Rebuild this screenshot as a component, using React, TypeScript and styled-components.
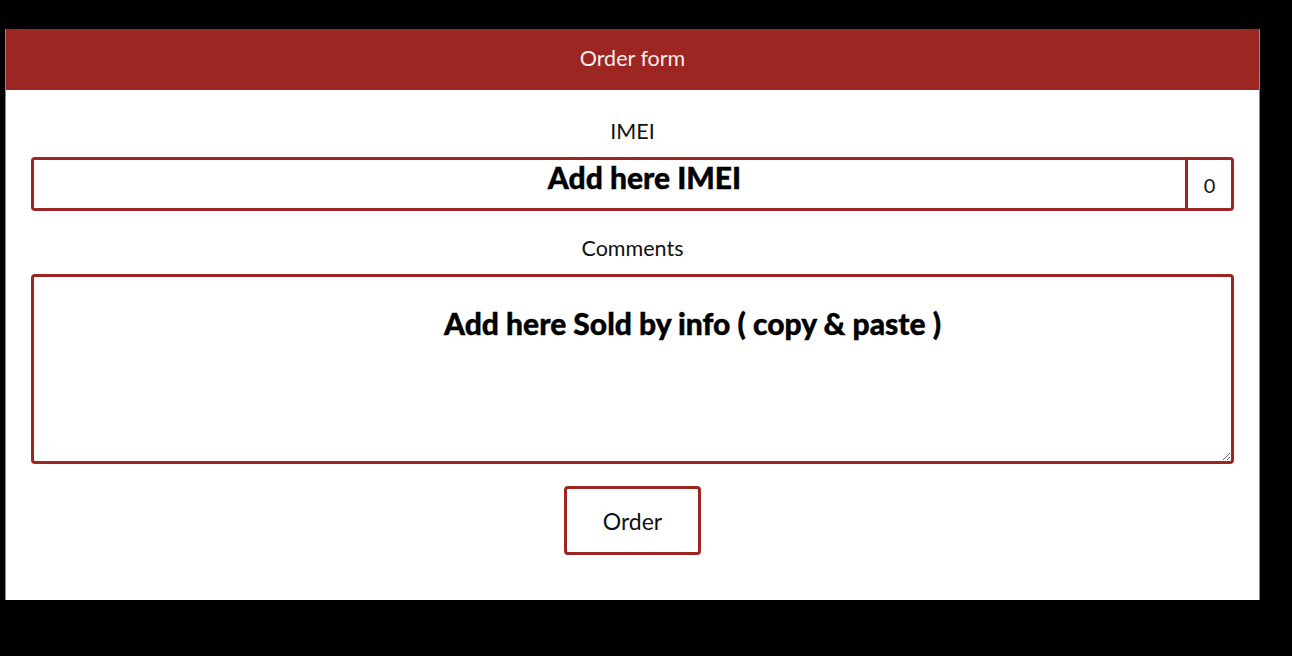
import React, { useState } from "react";
import styled, { createGlobalStyle } from "styled-components";

const GlobalStyle = createGlobalStyle`
  html, body {
    margin: 0;
    padding: 0;
    background: #000;
    font-family: Lato, "Open Sans", sans-serif;
  }
  * {
    box-sizing: border-box;
  }
`;

const red = "#9d2622";

const Page = styled.div`
  width: 1292px;
  height: 656px;
  background: #000;
  padding: 29px 0 0 5px;
`;

const Card = styled.div`
  width: 1255px;
  height: 571px;
  background: #fff;
  border-left: 1px solid #8a8a8a;
  border-right: 1px solid #8a8a8a;
  display: flex;
  flex-direction: column;
`;

const Header = styled.div`
  height: 61px;
  padding-bottom: 3px;
  background: ${red};
  color: #fbeeee;
  font-size: 21.5px;
  display: flex;
  align-items: center;
  justify-content: center;
`;

const Form = styled.form`
  padding: 29px 25px 0;
  display: flex;
  flex-direction: column;
`;

const Field = styled.div<{ $after: number }>`
  display: flex;
  flex-direction: column;
  align-items: stretch;
  gap: 14px;
  margin-bottom: ${(p) => p.$after}px;
`;

const Label = styled.label`
  font-size: 21.5px;
  line-height: 24px;
  color: #111;
  text-align: center;
`;

const InputRow = styled.div`
  display: flex;
  height: 54px;
  border: 3px solid ${red};
  border-radius: 4px;
`;

const bigPlaceholder = `
  font-family: Lato, "Open Sans", sans-serif;
  font-weight: 900;
  font-size: 30px;
  color: #000;
  -webkit-text-stroke: 0.4px #000;
  opacity: 1;
`;

const ImeiInput = styled.input`
  flex: 1;
  min-width: 0;
  border: none;
  border-right: 3px solid ${red};
  outline: none;
  text-align: center;
  padding: 0 0 14px 70px;
  ${bigPlaceholder}
  &::placeholder {
    ${bigPlaceholder}
  }
`;

const Count = styled.div`
  width: 43px;
  display: flex;
  align-items: center;
  justify-content: center;
  font-size: 20px;
  color: #111;
  padding-top: 2px;
`;

const Comments = styled.textarea`
  height: 190px;
  border: 3px solid ${red};
  border-radius: 4px;
  outline: none;
  resize: vertical;
  text-align: center;
  padding: 28px 0 0 120px;
  ${bigPlaceholder}
  &::placeholder {
    ${bigPlaceholder}
  }
`;

const OrderButton = styled.button`
  align-self: center;
  width: 137px;
  height: 69px;
  background: #fff;
  border: 3px solid ${red};
  border-radius: 4px;
  font-family: Lato, "Open Sans", sans-serif;
  font-size: 23px;
  color: #111;
  cursor: pointer;
`;

export default function App() {
  const [imei, setImei] = useState("");
  const [comments, setComments] = useState("");

  return (
    <Page>
      <GlobalStyle />
      <Card>
        <Header>Order form</Header>
        <Form onSubmit={(e) => e.preventDefault()}>
          <Field $after={25}>
            <Label htmlFor="imei">IMEI</Label>
            <InputRow>
              <ImeiInput
                id="imei"
                placeholder="Add here IMEI"
                value={imei}
                onChange={(e) => setImei(e.target.value)}
              />
              <Count>{imei.length}</Count>
            </InputRow>
          </Field>
          <Field $after={22}>
            <Label htmlFor="comments">Comments</Label>
            <Comments
              id="comments"
              placeholder="Add here Sold by info ( copy & paste )"
              value={comments}
              onChange={(e) => setComments(e.target.value)}
            />
          </Field>
          <OrderButton type="submit">Order</OrderButton>
        </Form>
      </Card>
    </Page>
  );
}
